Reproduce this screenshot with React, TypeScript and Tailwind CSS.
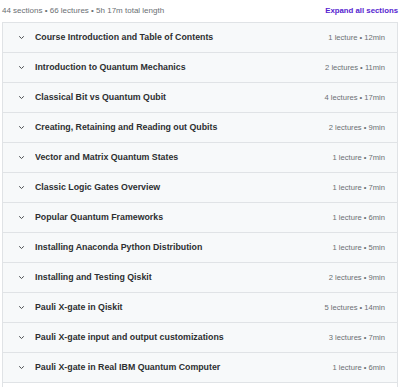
import React from "react";

const sections = [
  ["Course Introduction and Table of Contents", "1 lecture • 12min"],
  ["Introduction to Quantum Mechanics", "2 lectures • 11min"],
  ["Classical Bit vs Quantum Qubit", "4 lectures • 17min"],
  ["Creating, Retaining and Reading out Qubits", "2 lectures • 9min"],
  ["Vector and Matrix Quantum States", "1 lecture • 7min"],
  ["Classic Logic Gates Overview", "1 lecture • 7min"],
  ["Popular Quantum Frameworks", "1 lecture • 6min"],
  ["Installing Anaconda Python Distribution", "1 lecture • 5min"],
  ["Installing and Testing Qiskit", "2 lectures • 9min"],
  ["Pauli X-gate in Qiskit", "5 lectures • 14min"],
  ["Pauli X-gate input and output customizations", "3 lectures • 7min"],
  ["Pauli X-gate in Real IBM Quantum Computer", "1 lecture • 6min"],
];

function Chevron() {
  return (
    <svg width="7" height="5" viewBox="0 0 7 5" className="shrink-0">
      <path d="M1.2 1.3 L3.5 3.5 L5.8 1.3" fill="none" stroke="#4a4d50" strokeWidth="1" />
    </svg>
  );
}

export default function App() {
  return (
    <div className="w-[400px] h-[387px] bg-white overflow-hidden" style={{ fontFamily: '"Liberation Sans", Arial, sans-serif' }}>
      {/* header */}
      <div className="flex items-center justify-between h-[22px] pl-[2px] pr-[2px]">
        <span className="text-[8px] text-[#6a6f73]">44 sections • 66 lectures • 5h 17m total length</span>
        <span className="text-[7.8px] font-bold text-[#5624d0]">Expand all sections</span>
      </div>

      {/* accordion */}
      <div className="mx-[2px] border border-[#e0e3e6]">
        {sections.map(([title, meta], i) => (
          <div
            key={i}
            className="flex items-center h-[30px] bg-[#f7f9fa] border-b border-[#e0e3e6] pl-[15px] pr-[12px]"
          >
            <Chevron />
            <span className="ml-[10px] text-[8.8px] font-bold text-[#2d2f31] flex-1 truncate">{title}</span>
            <span className="text-[7.6px] text-[#6a6f73]">{meta}</span>
          </div>
        ))}
        <div className="h-[20px] bg-white"></div>
      </div>
    </div>
  );
}
